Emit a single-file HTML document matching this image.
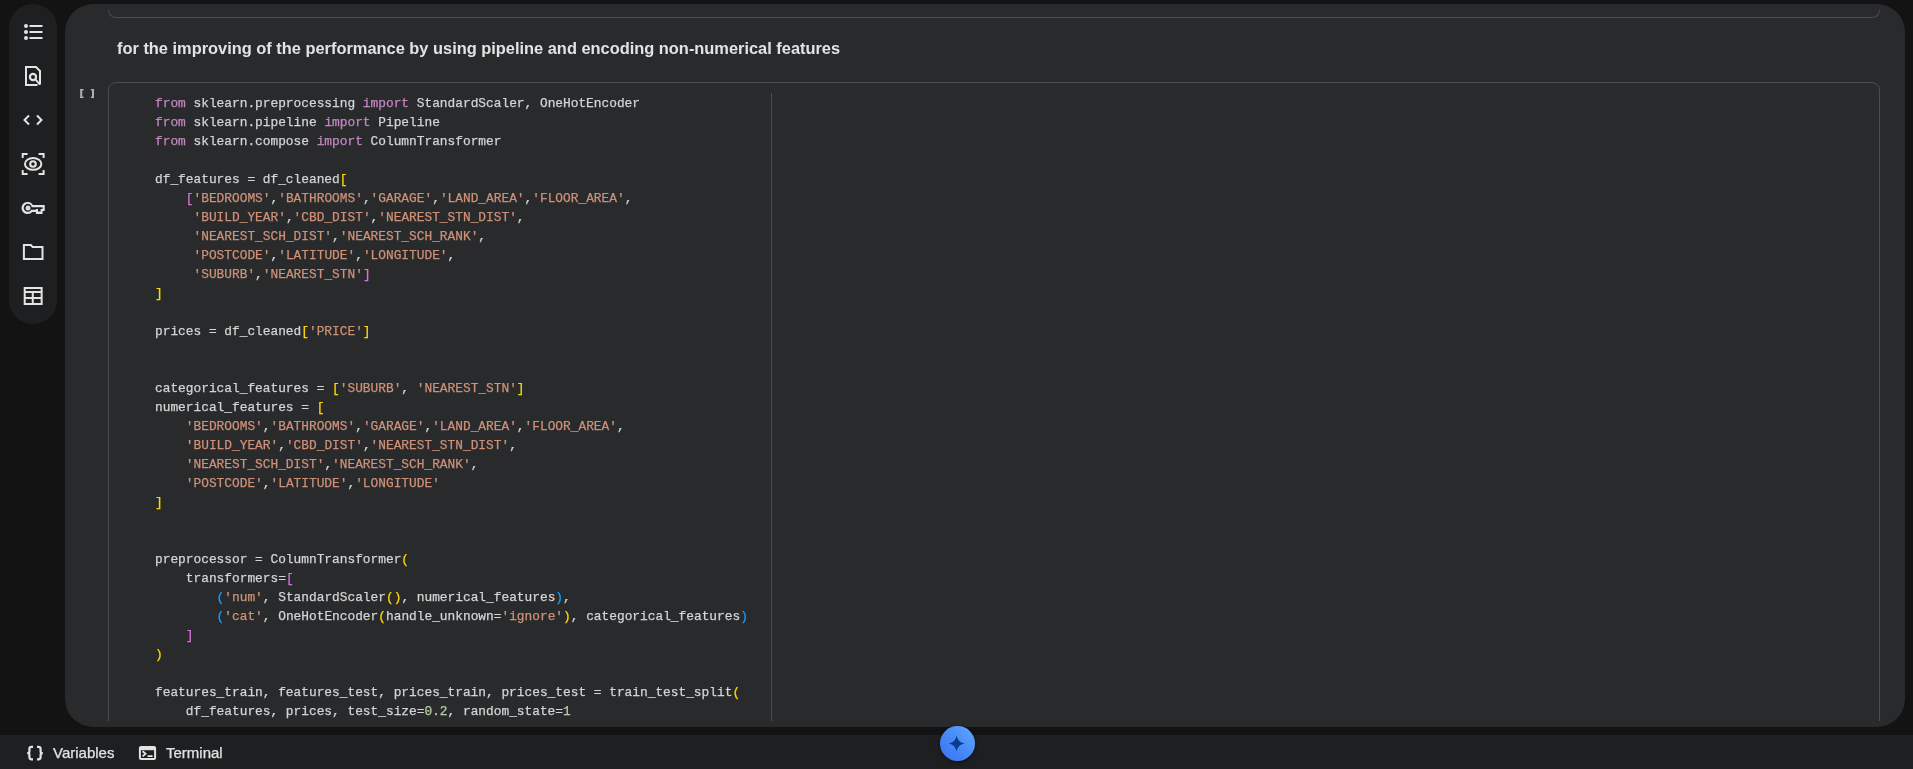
<!DOCTYPE html>
<html><head><meta charset="utf-8">
<style>
html,body{margin:0;padding:0;}
body{width:1913px;height:769px;background:#131314;position:relative;overflow:hidden;font-family:"Liberation Sans",sans-serif;}
.rail{position:absolute;left:9px;top:4px;width:48px;height:320px;background:#1e1f20;border-radius:24px;}
.main{position:absolute;left:65px;top:4px;width:1840px;height:723px;background:#282a2c;border-radius:28px;overflow:hidden;}
.clip{position:absolute;left:0;top:6px;width:1840px;height:711px;overflow:hidden;}
.prev{position:absolute;left:43px;top:-31px;width:1772px;height:39px;border:1px solid #4a4c4f;border-top:none;border-radius:0 0 8px 8px;box-sizing:border-box;}
.heading{position:absolute;left:52px;top:29px;font-size:16.4px;font-weight:bold;color:#e3e3e3;white-space:nowrap;will-change:transform;}
.cell{position:absolute;left:43px;top:72px;width:1772px;height:800px;border:1px solid #4a4c4f;border-radius:8px;box-sizing:border-box;}
.exec{position:absolute;left:13px;top:78px;font-family:"Liberation Mono",monospace;font-size:11px;letter-spacing:-0.9px;color:#b4b4b4;}
.code{position:absolute;left:90px;top:84px;font-family:"Liberation Mono",monospace;font-size:12.83px;line-height:19px;color:#d4d4d4;white-space:pre;will-change:transform;-webkit-text-stroke:0.25px currentColor;}
.ruler{position:absolute;left:706px;top:83px;width:1px;height:700px;background:#4a4c4f;}
.k{color:#c586c0}.s{color:#ce9178}.n{color:#b5cea8}.b1{color:#ffd700}.b2{color:#da70d6}.b3{color:#179fff}
.bottom{position:absolute;left:0;top:735px;width:1913px;height:34px;background:#1e1f20;}
.bitem{position:absolute;top:1px;height:34px;line-height:34px;font-size:15px;letter-spacing:0px;color:#e3e3e3;-webkit-text-stroke:0.25px #e3e3e3;will-change:transform;}
.fab{position:absolute;left:939.5px;top:726px;width:35px;height:35px;border-radius:50%;background:linear-gradient(225deg,#5eaaff 0%,#4a8dfb 45%,#3a6ff0 100%);box-shadow:0 1px 4px rgba(0,0,0,0.5);}
svg.ov{position:absolute;left:0;top:0;}
</style></head><body>
<div class="rail"></div>
<div class="main">
  <div class="clip">
    <div class="prev"></div>
    <div class="heading">for the improving of the performance by using pipeline and encoding non-numerical features</div>
    <div class="cell"></div>
    <div class="ruler"></div>
    <div class="code"><div class="ln"><span class="k">from</span> sklearn.preprocessing <span class="k">import</span> StandardScaler, OneHotEncoder</div><div class="ln"><span class="k">from</span> sklearn.pipeline <span class="k">import</span> Pipeline</div><div class="ln"><span class="k">from</span> sklearn.compose <span class="k">import</span> ColumnTransformer</div><div class="ln">&nbsp;</div><div class="ln">df_features = df_cleaned<span class="b1">[</span></div><div class="ln">    <span class="b2">[</span><span class="s">'BEDROOMS'</span>,<span class="s">'BATHROOMS'</span>,<span class="s">'GARAGE'</span>,<span class="s">'LAND_AREA'</span>,<span class="s">'FLOOR_AREA'</span>,</div><div class="ln">     <span class="s">'BUILD_YEAR'</span>,<span class="s">'CBD_DIST'</span>,<span class="s">'NEAREST_STN_DIST'</span>,</div><div class="ln">     <span class="s">'NEAREST_SCH_DIST'</span>,<span class="s">'NEAREST_SCH_RANK'</span>,</div><div class="ln">     <span class="s">'POSTCODE'</span>,<span class="s">'LATITUDE'</span>,<span class="s">'LONGITUDE'</span>,</div><div class="ln">     <span class="s">'SUBURB'</span>,<span class="s">'NEAREST_STN'</span><span class="b2">]</span></div><div class="ln"><span class="b1">]</span></div><div class="ln">&nbsp;</div><div class="ln">prices = df_cleaned<span class="b1">[</span><span class="s">'PRICE'</span><span class="b1">]</span></div><div class="ln">&nbsp;</div><div class="ln">&nbsp;</div><div class="ln">categorical_features = <span class="b1">[</span><span class="s">'SUBURB'</span>, <span class="s">'NEAREST_STN'</span><span class="b1">]</span></div><div class="ln">numerical_features = <span class="b1">[</span></div><div class="ln">    <span class="s">'BEDROOMS'</span>,<span class="s">'BATHROOMS'</span>,<span class="s">'GARAGE'</span>,<span class="s">'LAND_AREA'</span>,<span class="s">'FLOOR_AREA'</span>,</div><div class="ln">    <span class="s">'BUILD_YEAR'</span>,<span class="s">'CBD_DIST'</span>,<span class="s">'NEAREST_STN_DIST'</span>,</div><div class="ln">    <span class="s">'NEAREST_SCH_DIST'</span>,<span class="s">'NEAREST_SCH_RANK'</span>,</div><div class="ln">    <span class="s">'POSTCODE'</span>,<span class="s">'LATITUDE'</span>,<span class="s">'LONGITUDE'</span></div><div class="ln"><span class="b1">]</span></div><div class="ln">&nbsp;</div><div class="ln">&nbsp;</div><div class="ln">preprocessor = ColumnTransformer<span class="b1">(</span></div><div class="ln">    transformers=<span class="b2">[</span></div><div class="ln">        <span class="b3">(</span><span class="s">'num'</span>, StandardScaler<span class="b1">()</span>, numerical_features<span class="b3">)</span>,</div><div class="ln">        <span class="b3">(</span><span class="s">'cat'</span>, OneHotEncoder<span class="b1">(</span>handle_unknown=<span class="s">'ignore'</span><span class="b1">)</span>, categorical_features<span class="b3">)</span></div><div class="ln">    <span class="b2">]</span></div><div class="ln"><span class="b1">)</span></div><div class="ln">&nbsp;</div><div class="ln">features_train, features_test, prices_train, prices_test = train_test_split<span class="b1">(</span></div><div class="ln">    df_features, prices, test_size=<span class="n">0.2</span>, random_state=<span class="n">1</span></div></div>
  </div>
</div>
<div class="bottom">
  <div class="bitem" style="left:53px">Variables</div>
  <div class="bitem" style="left:166px">Terminal</div>
</div>
<div class="fab"></div>
<svg class="ov" width="1913" height="769" viewBox="0 0 1913 769">
 <g fill="none" stroke="#e3e3e3" stroke-width="2">
  <!-- list -->
  <path d="M29.5 26H42.5M29.5 32H42.5M29.5 38H42.5"/>
  <!-- doc search -->
  <path d="M37.5 85H26V67H36L40 71V84.5"/>
  <circle cx="33" cy="77" r="3.1" stroke-width="2.2"/>
  <path d="M35.2 79.2L40 84.6"/>
  <!-- code -->
  <path d="M29 115.5L24.5 120L29 124.5M37 115.5L41.5 120L37 124.5"/>
  <!-- eye with corners -->
  <path d="M22.7 158V153.9H27.6M38.6 153.9H43.6V158M22.7 170V174.1H27.6M38.6 174.1H43.6V170"/>
  <ellipse cx="33.15" cy="163.9" rx="8.2" ry="5.9"/>
  <circle cx="33" cy="164" r="2.8" stroke-width="2.1"/>
  <!-- key -->

  <!-- folder -->
  <path d="M23.9 259V245H30.8L32.6 246.9H42.5V259Z"/>
  <!-- table -->
  <path d="M24.7 288.1H41.65V304.1H24.7Z" />
  <path d="M24.7 292H41.65M24.7 297.9H41.65M32.75 292V304"/>
  <!-- braces -->
  <path d="M33 746.9H31.6Q29.4 746.9 29.4 749V751.4Q29.4 753.1 27.2 753.1Q29.4 753.1 29.4 754.8V757.3Q29.4 759.3 31.6 759.3H33" stroke-width="2.2"/>
  <path d="M37 746.9H38.4Q40.6 746.9 40.6 749V751.4Q40.6 753.1 42.8 753.1Q40.6 753.1 40.6 754.8V757.3Q40.6 759.3 38.4 759.3H37" stroke-width="2.2"/>
  <!-- terminal -->
  <rect x="139.9" y="746.9" width="15.2" height="12.1" rx="1.2"/>
  <path d="M140 748.5H155" stroke-width="3.4"/>
  <path d="M142.6 751.2L145.6 753.8L142.6 756.4M147.5 756.1H152.6" stroke-width="1.8"/>
 </g>
 <g fill="#b0b0b0">
  <rect x="80.2" y="89" width="2" height="9"/><rect x="80.2" y="89" width="3.4" height="1.4"/><rect x="80.2" y="96.6" width="3.4" height="1.4"/>
  <rect x="92" y="89" width="2" height="9"/><rect x="90.9" y="89" width="3.1" height="1.4"/><rect x="90.9" y="96.6" width="3.1" height="1.4"/>
 </g>
 <g fill="#e3e3e3">
  <circle cx="26" cy="26" r="2"/><circle cx="26" cy="32" r="2"/><circle cx="26" cy="38" r="2"/>
 </g>
 <path fill="#e3e3e3" fill-rule="evenodd" d="M32.9 205H44.7V210.9H42.6V214H35.9V211.9H32.3A6.1 6.1 0 1 1 32.9 205ZM31.7 207.3H42.6V209H40.6V211.4H38V209H35.9V209.8H31.2A4 4 0 1 1 31.7 207.3Z"/>
 <circle cx="28" cy="208" r="2.5" fill="#d8d8d8"/>
 <path d="M956.60 735.60 C957.70 740.40 959.80 742.50 964.60 743.60 C959.80 744.70 957.70 746.80 956.60 751.60 C955.50 746.80 953.40 744.70 948.60 743.60 C953.40 742.50 955.50 740.40 956.60 735.60 Z" fill="#0b3b8c"/>
</svg>
</body></html>
